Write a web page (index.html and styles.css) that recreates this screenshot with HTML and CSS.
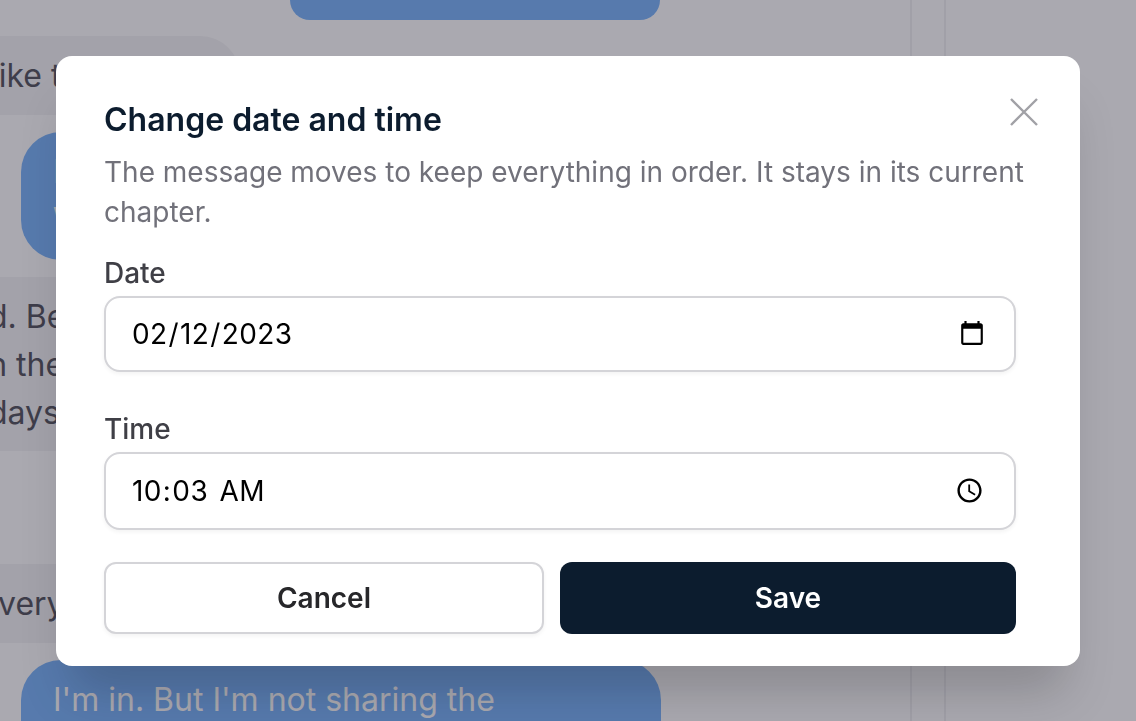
FILE: index.html
```html
<!DOCTYPE html>
<html lang="en">
<head>
<meta charset="utf-8">
<title>Change date and time</title>
<link rel="stylesheet" href="styles.css">
</head>
<body>
<div class="page">
  <main class="chat">
    <div class="bubble sent top"></div>
    <div class="bubble received first"><p>like to join us</p></div>
    <div class="bubble sent second"><p>I<br>W</p></div>
    <div class="bubble received third">
      <p class="line line-a">nd. Be</p>
      <p class="line line-a">on the</p>
      <p class="line line-b">days</p>
    </div>
    <div class="bubble received fourth"><p>every</p></div>
    <div class="bubble sent last"><p>I'm in. But I'm not sharing the</p></div>
  </main>
  <div class="rail"></div>
</div>
<div class="overlay">
  <section class="modal" role="dialog" aria-labelledby="modal-title">
    <button class="close" type="button" aria-label="Close">
      <svg viewBox="0 0 30 30" width="30" height="30" aria-hidden="true"><path d="M2 2 28 28M28 2 2 28"/></svg>
    </button>
    <h2 id="modal-title" class="title">Change date and time</h2>
    <p class="description">The message moves to keep everything in order. It stays in its current chapter.</p>
    <form class="form">
      <label class="field">
        <span class="label">Date</span>
        <input class="input input-date" type="date" value="2023-02-12">
      </label>
      <label class="field">
        <span class="label">Time</span>
        <input class="input input-time" type="time" value="10:03">
      </label>
      <div class="actions">
        <button class="btn cancel" type="button">Cancel</button>
        <button class="btn save" type="button">Save</button>
      </div>
    </form>
  </section>
</div>
</body>
</html>
```

FILE: styles.css
```css
* { box-sizing: border-box; }
html, body { margin: 0; height: 100%; overflow: hidden; }
body { font-family: Inter, "Liberation Sans", sans-serif; background: #fff; color: #18181b; }

.page { display: flex; height: 721px; overflow: hidden; }
.chat { width: 912px; height: 721px; border-right: 2px solid #f0f0f2; display: flex; flex-direction: column; overflow: hidden; flex: none; }
.rail { width: 34px; border-right: 2px solid #f0f0f2; flex: none; }

.bubble { font-size: 32px; line-height: 48px; flex: none; }
.bubble p { margin: 0; }
.received { background: #f4f4f5; color: #52525b; }
.sent { background: #79b4fb; color: #fff; border-radius: 40px; }
.top { width: 370px; height: 20px; margin-left: 290px; border-radius: 0 0 40px 40px; }
.first { width: 240px; height: 79px; margin-top: 16px; border-radius: 0 40px 0 0; padding-top: 16px; text-indent: -9px; white-space: nowrap; overflow: hidden; }
.second { width: 300px; height: 128px; margin: 17px 0 0 21px; padding: 16px 32px; }
.third { width: 500px; height: 174px; margin-top: 17px; padding-top: 16px; overflow: hidden; white-space: nowrap; }
.bubble .line-a { margin-left: -31px; }
.bubble .line-b { margin-left: -12px; }
.fourth { width: 500px; height: 79px; margin-top: 113px; padding-top: 16px; white-space: nowrap; overflow: hidden; text-indent: -20px; }
.last { width: 640px; height: 120px; margin: 17px 0 0 21px; padding: 16px 32px; white-space: nowrap; }

.overlay { position: fixed; inset: 0; background: rgba(32, 28, 48, .38); padding: 56px; display: flex; align-items: flex-start; }
.modal { position: relative; width: 1024px; height: 610px; background: #fff; border-radius: 16px; padding: 48px; box-shadow: 0 40px 50px -14px rgba(0, 0, 0, .19); }

.close { position: absolute; top: 41px; right: 41px; width: 30px; height: 30px; padding: 0; border: 0; background: none; display: block; }
.close svg { display: block; }
.close path { stroke: #a1a1a6; stroke-width: 2.4; fill: none; }

.title { margin: 0; font-size: 32px; line-height: 32px; font-weight: 600; color: #0c1c2e; }
.description { margin: 16px 0 0; font-size: 28px; line-height: 40px; color: #71717a; }

.form { display: flex; flex-direction: column; }
.field { display: block; margin-bottom: 16px; }
.label { display: block; font-size: 28px; line-height: 32px; font-weight: 500; color: #3f3f46; margin: 25px 0 7px; }
.input { display: block; width: 912px; height: 76px; padding: 0 26px 0 25px; border: 2px solid #d4d4d8; border-radius: 16px; background: #fff; font-family: Inter, sans-serif; font-size: 28px; letter-spacing: .4px; color: #000; box-shadow: 0 2px 4px rgba(0, 0, 0, .05); }
.input-time { height: 78px; padding-right: 27px; }
.input-time::-webkit-datetime-edit-ampm-field { margin-left: 4px; }

.actions { display: flex; gap: 16px; margin-top: 16px; }
.btn { height: 72px; border-radius: 12px; font-family: Inter, sans-serif; font-size: 28px; font-weight: 600; }
.cancel { width: 440px; border: 2px solid #d4d4d8; background: #fff; color: #27272a; box-shadow: 0 2px 4px rgba(0, 0, 0, .05); }
.save { width: 456px; border: 0; background: #0c1c2e; color: #fff; }
```
